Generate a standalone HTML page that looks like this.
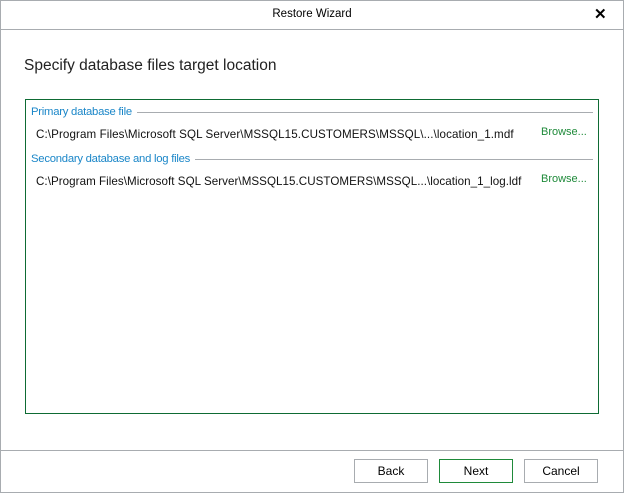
<!DOCTYPE html>
<html><head><style>
body{margin:0;width:624px;height:493px;background:#fff;font-family:"Liberation Sans",sans-serif;overflow:hidden;position:relative}
.win{position:absolute;left:0;top:0;width:622px;height:491px;border:1px solid #a8acb0}
.t{position:absolute;white-space:nowrap}
.line{position:absolute;height:1px;background:#a8acb0}
.grp{position:absolute;left:31px;width:562px;display:flex;align-items:center;font-size:11.3px;color:#1a86c8;white-space:nowrap;letter-spacing:-0.25px}
.grp i{flex:1;height:1px;background:#a8acb0;margin-left:5px}
.btn{position:absolute;top:459px;width:72px;height:22px;border:1px solid #a8acb0;text-align:center;line-height:22px;font-size:12px;color:#000}
</style></head><body>
<div class="win"></div>
<div class="t" style="left:0;width:624px;text-align:center;top:8px;font-size:11.5px">Restore Wizard</div>
<div class="t" style="left:594px;top:5px;font-size:15px;font-weight:bold">✕</div>
<div class="line" style="left:1px;top:29px;width:622px"></div>
<div class="t" style="left:24px;top:57px;font-size:15.5px;color:#222">Specify database files target location</div>
<div style="position:absolute;left:25px;top:99px;width:572px;height:313px;border:1px solid #0e6b34"></div>
<div class="grp" style="top:106px">Primary database file<i></i></div>
<div class="t" style="left:36px;top:128px;font-size:11.6px;color:#111;letter-spacing:0.1px">C:\Program Files\Microsoft SQL Server\MSSQL15.CUSTOMERS\MSSQL\...\location_1.mdf</div>
<div class="t" style="left:541px;top:126px;font-size:11px;color:#1f8a3a">Browse...</div>
<div class="grp" style="top:153px">Secondary database and log files<i></i></div>
<div class="t" style="left:36px;top:175px;font-size:11.6px;color:#111;letter-spacing:0.05px">C:\Program Files\Microsoft SQL Server\MSSQL15.CUSTOMERS\MSSQL...\location_1_log.ldf</div>
<div class="t" style="left:541px;top:173px;font-size:11px;color:#1f8a3a">Browse...</div>
<div class="line" style="left:1px;top:450px;width:622px"></div>
<div class="btn" style="left:354px">Back</div>
<div class="btn" style="left:439px;border-color:#1f8a3a">Next</div>
<div class="btn" style="left:524px">Cancel</div>
</body></html>
